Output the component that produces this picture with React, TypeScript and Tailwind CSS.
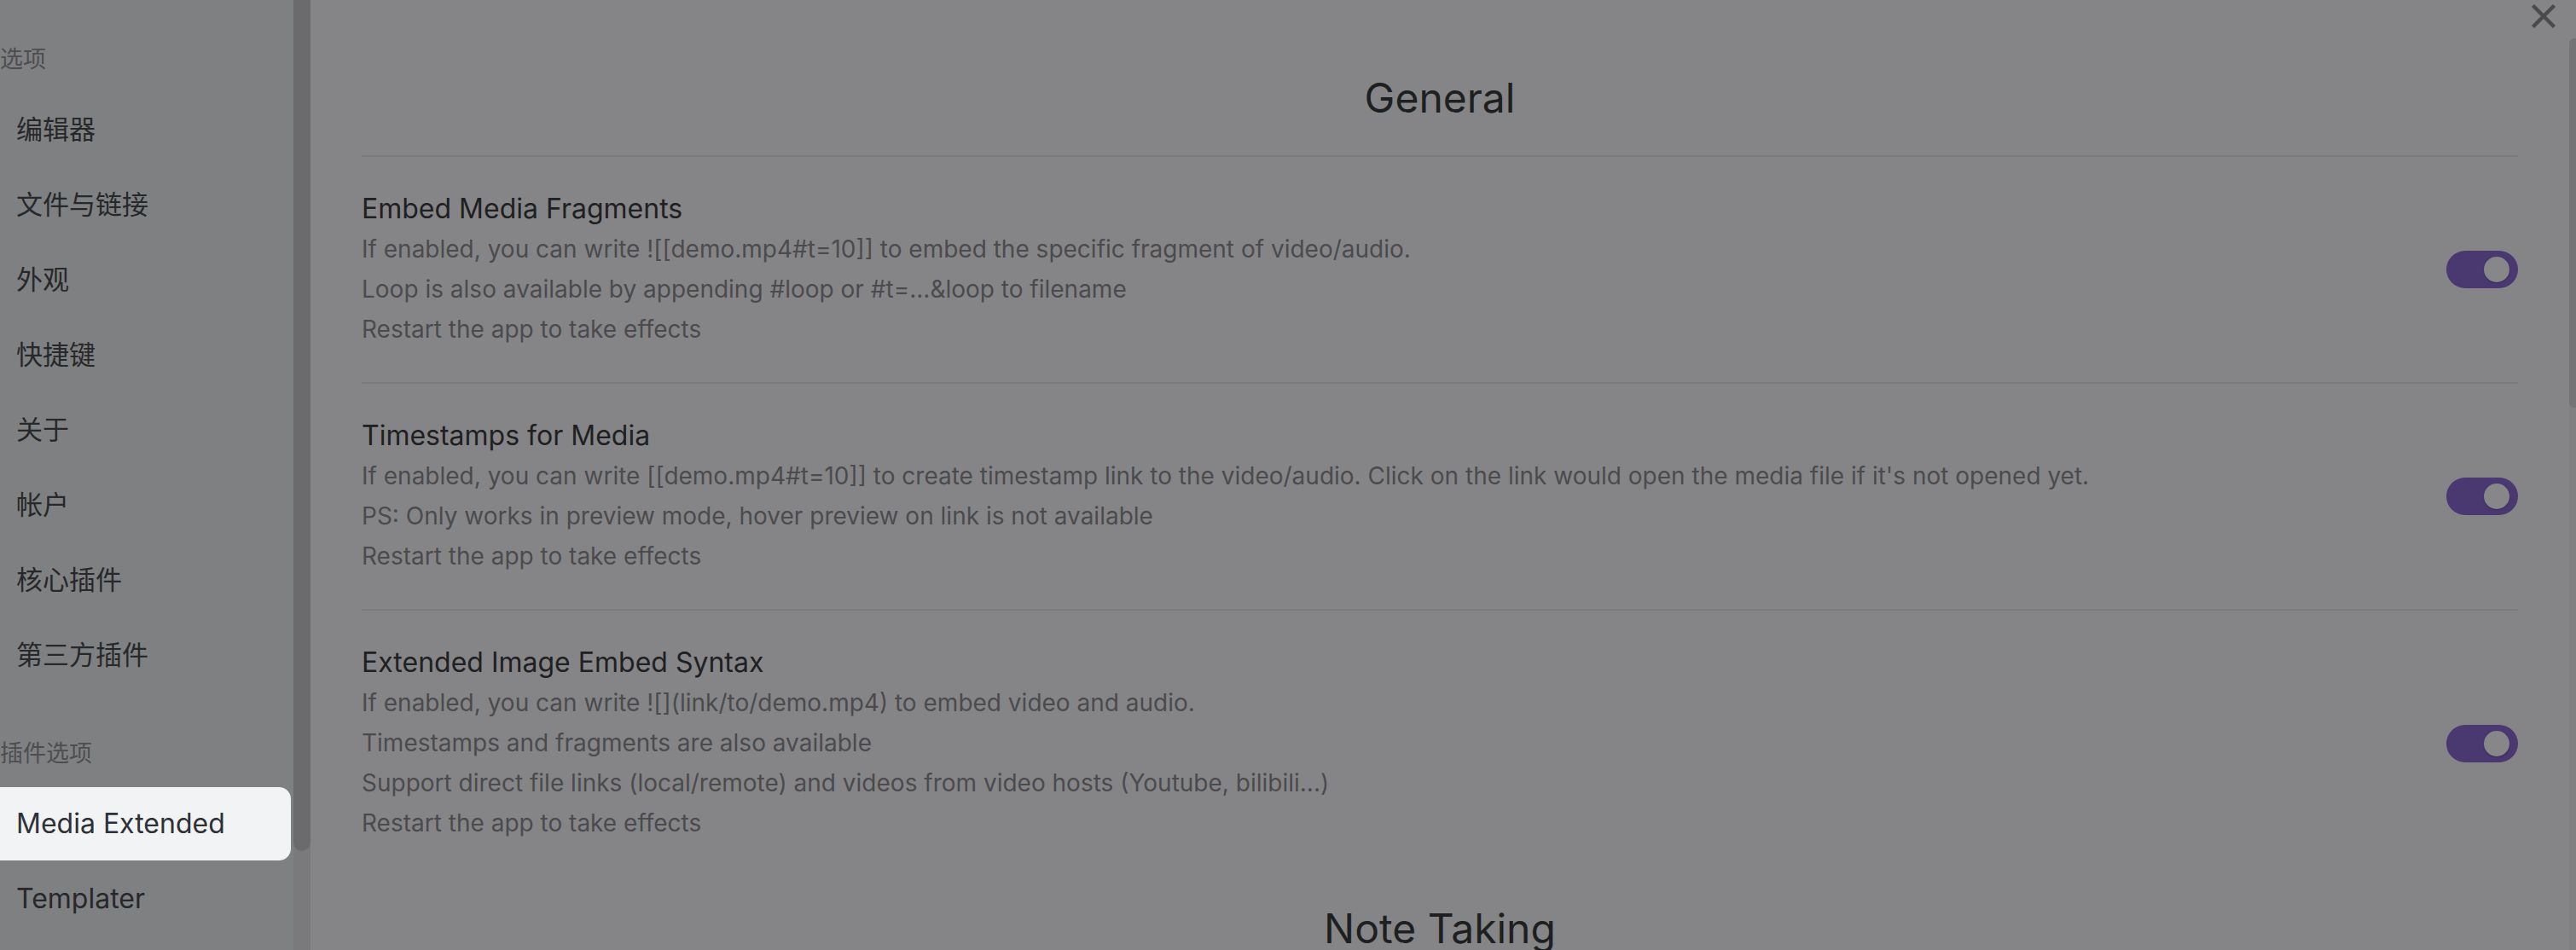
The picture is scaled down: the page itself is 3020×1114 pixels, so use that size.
import React from 'react';

const FONT = 'font-["Inter","Noto_Sans_CJK_SC",sans-serif]';

interface SettingConfig {
  name: string;
  desc: string[];
  enabled: boolean;
}

const GENERAL_SETTINGS: SettingConfig[] = [
  {
    name: 'Embed Media Fragments',
    desc: [
      'If enabled, you can write ![[demo.mp4#t=10]] to embed the specific fragment of video/audio.',
      'Loop is also available by appending #loop or #t=...&loop to filename',
      'Restart the app to take effects',
    ],
    enabled: true,
  },
  {
    name: 'Timestamps for Media',
    desc: [
      "If enabled, you can write [[demo.mp4#t=10]] to create timestamp link to the video/audio. Click on the link would open the media file if it's not opened yet.",
      'PS: Only works in preview mode, hover preview on link is not available',
      'Restart the app to take effects',
    ],
    enabled: true,
  },
  {
    name: 'Extended Image Embed Syntax',
    desc: [
      'If enabled, you can write ![](link/to/demo.mp4) to embed video and audio.',
      'Timestamps and fragments are also available',
      'Support direct file links (local/remote) and videos from video hosts (Youtube, bilibili...)',
      'Restart the app to take effects',
    ],
    enabled: true,
  },
];

const NAV_GROUPS = [
  {
    title: '选项',
    items: ['编辑器', '文件与链接', '外观', '快捷键', '关于', '帐户', '核心插件', '第三方插件'],
  },
  {
    title: '插件选项',
    items: ['Media Extended', 'Templater'],
  },
];

const ACTIVE_ITEM = 'Media Extended';

// CJK labels render a touch smaller than the latin ones in the original
const isLatin = (s: string) => /^[\x20-\x7e]+$/.test(s);

const Toggle: React.FC<{ on: boolean }> = ({ on }) => (
  <div
    className={
      on
        ? 'relative h-[44px] w-[84px] shrink-0 rounded-full bg-[#4a3871]'
        : 'relative h-[44px] w-[84px] shrink-0 rounded-full bg-[#6f6f71]'
    }
  >
    <div
      className={
        on
          ? 'absolute top-[7px] right-[10px] h-[30px] w-[30px] rounded-full bg-[#878789] shadow-[0_1px_2px_rgba(0,0,0,0.25)]'
          : 'absolute top-[7px] left-[10px] h-[30px] w-[30px] rounded-full bg-[#878789] shadow-[0_1px_2px_rgba(0,0,0,0.25)]'
      }
    />
  </div>
);

const SettingItem: React.FC<{ setting: SettingConfig }> = ({ setting }) => (
  <div className="flex items-center gap-[40px] border-t-2 border-[#7a7a7c] py-[38px]">
    <div className="min-w-0 flex-1">
      <div className="text-[32px] leading-[45px] text-[#1f2022]">{setting.name}</div>
      <div className="mt-[2px] text-[28px] leading-[47px] text-[#4b4b4d]">
        {setting.desc.map((line) => (
          <div key={line} className="whitespace-nowrap">
            {line}
          </div>
        ))}
      </div>
    </div>
    <Toggle on={setting.enabled} />
  </div>
);

const Sidebar: React.FC = () => (
  <aside className="flex h-full shrink-0">
    <div className="h-full w-[344px] overflow-hidden bg-[#7f8082] pt-[45px]">
      {NAV_GROUPS.map((group, gi) => (
        <div key={group.title} className={gi > 0 ? 'mt-[48px]' : ''}>
          <div className="mb-[14px] flex h-[50px] items-center text-[27px] text-[#4e4e50]">
            {group.title}
          </div>
          {group.items.map((item) => (
            <div
              key={item}
              className={
                (item === ACTIVE_ITEM
                  ? '-ml-[20px] mb-[2px] flex h-[86px] w-[361px] items-center rounded-[14px] bg-[#f2f3f5] pl-[39px] text-[#2e3137]'
                  : '-ml-[20px] mb-[2px] flex h-[86px] w-[361px] items-center pl-[39px] text-[#27282a]') +
                (isLatin(item) ? ' text-[32px]' : ' text-[31px]')
              }
            >
              {item}
            </div>
          ))}
        </div>
      ))}
    </div>
    {/* Sidebar scrollbar */}
    <div className="h-full w-[20px] bg-[#7a7a7c]">
      <div className="h-[998px] w-full rounded-b-[10px] bg-[#6b6b6d]" />
    </div>
  </aside>
);

export default function App() {
  return (
    <div className={`relative flex h-[1114px] w-full overflow-hidden bg-[#858587] ${FONT}`}>
      <Sidebar />

      <main className="h-full min-w-0 flex-1 overflow-hidden px-[60px] pt-[48px]">
        <div className="py-[38px] text-center text-[48px] leading-[58px] text-[#1e1f21]">General</div>
        {GENERAL_SETTINGS.map((s) => (
          <SettingItem key={s.name} setting={s} />
        ))}
        <div className="pt-[33px] text-center text-[48px] leading-[58px] text-[#1e1f21]">Note Taking</div>
      </main>

      {/* Main scrollbar */}
      <div className="h-full w-[8px] shrink-0 pt-[45px]">
        <div className="h-full w-full rounded-tl-[6px] bg-[#808082]">
          <div className="h-[433px] w-full rounded-tl-[6px] rounded-bl-[6px] bg-[#747476]" />
        </div>
      </div>

      {/* Close button */}
      <button className="absolute top-[5px] right-[24px] h-[28px] w-[28px]">
        <svg width="28" height="28" viewBox="0 0 28 28" className="overflow-visible">
          <path d="M1.5 1.5 26.5 26.5 M26.5 1.5 1.5 26.5" stroke="#4a4a4c" strokeWidth="4.5" fill="none" />
        </svg>
      </button>
    </div>
  );
}
